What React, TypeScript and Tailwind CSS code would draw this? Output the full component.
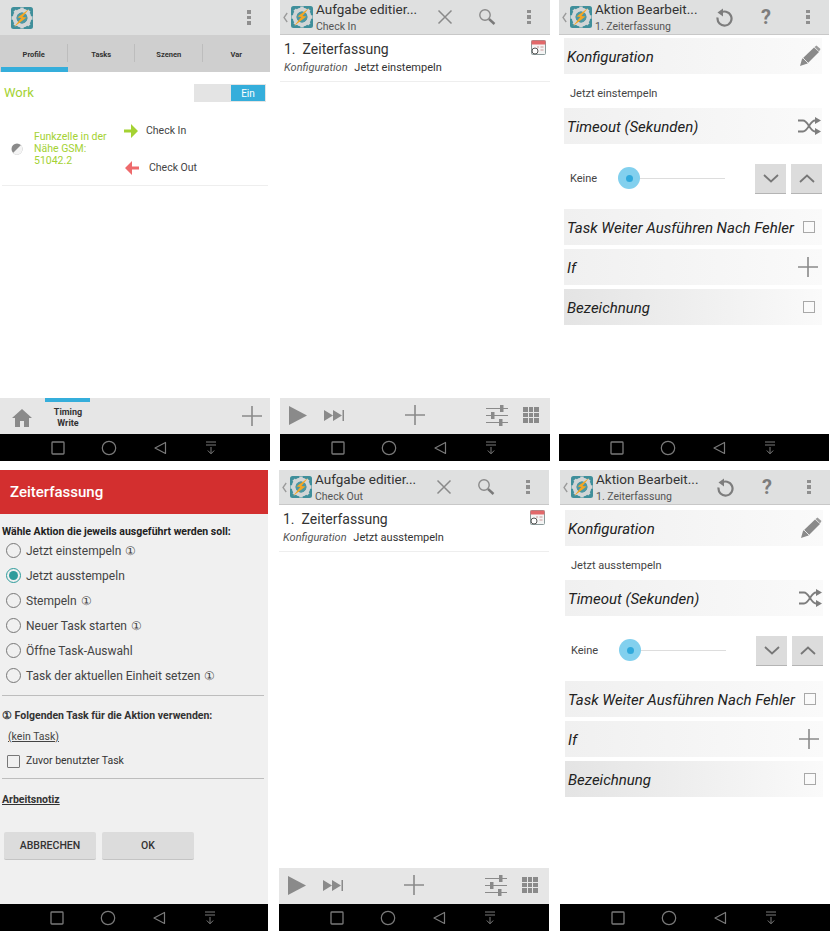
import type { ReactNode } from "react";

const font = { fontFamily: "Roboto, 'Liberation Sans', sans-serif" };

function Logo() {
  return (
    <svg width="22" height="22" viewBox="0 0 22 22" className="shrink-0">
      <rect width="22" height="22" rx="2.5" fill="#3f8f9b" />
      <circle cx="11" cy="11" r="7.4" fill="none" stroke="#d2d5d6" strokeWidth="4" />
      <g stroke="#d2d5d6" strokeWidth="3.4">
        <path d="M11 0.5v3.5M11 18v3.5M0.5 11H4M18 11h3.5M3.6 3.6l2.4 2.4M16 16l2.4 2.4M18.4 3.6L16 6M6 16l-2.4 2.4" />
      </g>
      <circle cx="11" cy="11" r="5.4" fill="#4d97a3" />
      <path d="M18 2L6.5 10.5l3.8.4L3 20l12.5-9.5-4-.4z" fill="#f5a623" />
    </svg>
  );
}

function Dots() {
  return (
    <div className="flex flex-col gap-[2px]">
      <div className="w-[4px] h-[3.5px] bg-[#8f8f8f]" />
      <div className="w-[4px] h-[3.5px] bg-[#8f8f8f]" />
      <div className="w-[4px] h-[3.5px] bg-[#8f8f8f]" />
    </div>
  );
}

function Plus({ size = 22 }: { size?: number }) {
  return (
    <svg width={size} height={size} viewBox="0 0 22 22">
      <path d="M11 1v20M1 11h20" stroke="#8a8a8a" strokeWidth="1.6" />
    </svg>
  );
}

function NavBar({ narrow }: { narrow?: boolean }) {
  return (
    <div className={`h-[27px] bg-black flex items-center shrink-0 ${narrow ? "pl-[31px]" : "pl-[32px]"}`}>
      <div className="w-[51px] flex justify-center">
        <svg width="14" height="14" viewBox="0 0 14 14">
          <rect x="1" y="1" width="12" height="12" rx="0.8" fill="none" stroke="#7a7a7a" strokeWidth="1.3" />
        </svg>
      </div>
      <div className="w-[51px] flex justify-center">
        <svg width="16" height="16" viewBox="0 0 16 16">
          <circle cx="8" cy="8" r="6.7" fill="none" stroke="#7a7a7a" strokeWidth="1.2" />
        </svg>
      </div>
      <div className="w-[51px] flex justify-center">
        <svg width="14" height="14" viewBox="0 0 14 14">
          <path d="M12.5 1.5v11L2 7z" fill="none" stroke="#7a7a7a" strokeWidth="1.2" strokeLinejoin="round" />
        </svg>
      </div>
      <div className="w-[51px] flex justify-center">
        <svg width="12" height="14" viewBox="0 0 12 14">
          <path d="M1 1h10M1 4h10M6 6v6.5M2.8 9.5L6 12.8l3.2-3.3" fill="none" stroke="#7a7a7a" strokeWidth="1" />
        </svg>
      </div>
    </div>
  );
}

function Header({ title, sub, actions }: { title: string; sub: string; actions: ReactNode[] }) {
  return (
    <div className="h-[35px] bg-[#dfe0e0] border-b border-[#c8c8c8] flex items-center shrink-0">
      <svg width="5" height="11" viewBox="0 0 5 11" className="ml-[3px] mr-[3px] shrink-0">
        <path d="M4.2 1L1 5.5 4.2 10" fill="none" stroke="#9a9a9a" strokeWidth="1.3" />
      </svg>
      <div className="-mt-[1px]">
        <Logo />
      </div>
      <div className="ml-[3px] w-[108px] shrink-0 mt-[1px]">
        <div className="text-[13.5px] leading-[16px] text-[#333] whitespace-nowrap">{title}</div>
        <div className="text-[10.5px] leading-[14px] mt-[3px] text-[#555] whitespace-nowrap">{sub}</div>
      </div>
      {actions.map((a, i) => (
        <div key={i} className="w-[42px] flex justify-center shrink-0">
          {a}
        </div>
      ))}
    </div>
  );
}

function TaskBottomBar() {
  return (
    <div className="mt-auto h-[36px] pb-[2px] bg-[#e6e6e6] flex items-center shrink-0">
      <svg width="18" height="19" viewBox="0 0 18 19" className="ml-[9px]">
        <path d="M0 0l18 9.5L0 19z" fill="#8a8a8a" />
      </svg>
      <svg width="20" height="11" viewBox="0 0 20 11" className="ml-[17px]">
        <path d="M0 0l9 5.5L0 11zM9 0l9 5.5L9 11z" fill="#8a8a8a" />
        <rect x="18.5" width="1.5" height="11" fill="#8a8a8a" />
      </svg>
      <div className="ml-[60px]">
        <Plus />
      </div>
      <svg width="22" height="21" viewBox="0 0 22 21" className="ml-[60px]">
        <path d="M0 3.5h22M0 10.5h22M0 17.5h22" stroke="#8a8a8a" strokeWidth="1.2" />
        <rect x="14" y="0" width="3.5" height="7" fill="#8a8a8a" />
        <rect x="5" y="7" width="3.5" height="7" fill="#8a8a8a" />
        <rect x="13" y="14" width="3.5" height="7" fill="#8a8a8a" />
      </svg>
      <div className="ml-[15px] grid grid-cols-3 gap-[1px] w-[16px]">
        {Array.from({ length: 9 }).map((_, i) => (
          <div key={i} className="h-[4.4px] bg-[#8a8a8a]" />
        ))}
      </div>
    </div>
  );
}

function TaskPanel({ sub, action }: { sub: string; action: string }) {
  return (
    <div className="w-[270px] h-[461px] flex flex-col shrink-0">
      <Header
        title="Aufgabe editier..."
        sub={sub}
        actions={[
          <svg key="x" width="16" height="16" viewBox="0 0 16 16">
            <path d="M1.5 1.5l13 13M14.5 1.5l-13 13" stroke="#8a8a8a" strokeWidth="1.5" />
          </svg>,
          <svg key="s" width="18" height="18" viewBox="0 0 18 18">
            <circle cx="7" cy="7" r="5.2" fill="none" stroke="#8a8a8a" strokeWidth="1.4" />
            <path d="M11 11l5.5 5" stroke="#7a7a7a" strokeWidth="2.4" />
          </svg>,
          <Dots key="d" />,
        ]}
      />
      <div className="h-[47px] border-b border-[#eeeeee] px-[4px] relative">
        <div className="text-[14px] leading-[18px] mt-[5px] text-[#333]">
          <span className="mr-[7px]">1.</span>
          Zeiterfassung
        </div>
        <div className="text-[11px] leading-[14px] mt-[3px] text-[#333]">
          <span className="italic text-[#555] mr-[4px]">Konfiguration</span> {action}
        </div>
        <svg width="15" height="15" viewBox="0 0 15 15" className="absolute right-[4px] top-[5px]">
          <rect x="0.5" y="0.5" width="14" height="14" rx="1" fill="#f4f4f4" stroke="#8a9a9a" />
          <rect x="0.5" y="0.5" width="14" height="4" fill="#e2686a" />
          <path d="M6 7h2M9.5 7h3M9.5 10h3" stroke="#c99" strokeWidth="1.2" />
          <circle cx="4" cy="11" r="3" fill="#fff" stroke="#555" />
        </svg>
      </div>
      <TaskBottomBar />
      <NavBar />
    </div>
  );
}

function ActionRow({ label, right, dark }: { label: string; right: ReactNode; dark?: boolean }) {
  return (
    <div
      className={`h-[36px] flex items-center justify-between pl-[3px] bg-gradient-to-r ${
        dark ? "from-[#e4e4e4] to-[#fafafa]" : "from-[#f0f0f0] to-[#fafafa]"
      }`}
    >
      <span className="text-[15px] italic text-[#222] whitespace-nowrap mt-[2px]">{label}</span>
      {right}
    </div>
  );
}

function Checkbox() {
  return <div className="w-[12px] h-[12px] border border-[#a8a8a8] bg-[#fafafa] mr-[7px]" />;
}

function Chevron({ up }: { up?: boolean }) {
  return (
    <div className="w-[31px] h-[30px] bg-[#dcdcdc] border-b border-[#b4b4b4] flex items-center justify-center">
      <svg width="16" height="9" viewBox="0 0 16 9">
        <path d={up ? "M1 8l7-6.5L15 8" : "M1 1l7 6.5L15 1"} fill="none" stroke="#777" strokeWidth="1.8" />
      </svg>
    </div>
  );
}

function ActionPanel({ action, low }: { action: string; low?: boolean }) {
  return (
    <div className="w-[270px] h-[461px] flex flex-col shrink-0">
      <Header
        title="Aktion Bearbeit..."
        sub="1. Zeiterfassung"
        actions={[
          <svg key="r" width="18" height="19" viewBox="0 0 18 19">
            <path d="M5 5.2A7 7 0 1 1 2.6 9.5" fill="none" stroke="#7d7d7d" strokeWidth="2.2" />
            <path d="M8 0.5v8L2.5 4.5z" fill="#7d7d7d" />
          </svg>,
          <span key="q" className="text-[20px] font-bold leading-none text-[#7d7d7d]">?</span>,
          <Dots key="d" />,
        ]}
      />
      <div className={`pl-[5px] pr-[7px] flex-1 flex flex-col ${low ? "pt-[5px]" : "pt-[3px]"}`}>
        <ActionRow
          label="Konfiguration"
          right={
            <svg width="22" height="22" viewBox="0 0 22 22" className="mr-[1px]">
              <path d="M1 21l2-7L15 2.5l5 4.5L8.5 18.5z" fill="#8a8a8a" />
              <path d="M15.5 2l2-1.5 4 3.5-1.5 2.5z" fill="#9a9a9a" />
              <path d="M4 13l5 5" stroke="#e8e8e8" strokeWidth="1" />
            </svg>
          }
        />
        <div className="h-[34px] flex items-center pl-[6px] pt-[6px] text-[11px] text-[#444]">{action}</div>
        <ActionRow
          label="Timeout (Sekunden)"
          right={
            <svg width="23" height="18" viewBox="0 0 23 18" className="mr-[1px]">
              <path d="M0 3.5h5c5 0 7 11 12 11h2M0 14.5h5c5 0 7-11 12-11h2" fill="none" stroke="#7d7d7d" strokeWidth="1.8" />
              <path d="M17 0l6 3.5L17 7zM17 11l6 3.5L17 18z" fill="#7d7d7d" />
            </svg>
          }
        />
        <div className="h-[65px] flex items-center pt-[4px]">
          <span className="text-[11px] text-[#444] ml-[6px] w-[48px] mt-[2px]">Keine</span>
          <div className="relative w-[107px] h-[1px] bg-[#dddddd]">
            <div className="absolute -top-[11px] left-0 w-[22px] h-[22px] rounded-full bg-[#82d0ee] flex items-center justify-center">
              <div className="w-[7px] h-[7px] rounded-full bg-[#2fa9dc]" />
            </div>
          </div>
          <div className="ml-[30px] flex gap-[5px]">
            <Chevron />
            <Chevron up />
          </div>
        </div>
        <div className="flex flex-col gap-[4px]">
          <ActionRow label="Task Weiter Ausführen Nach Fehler" right={<Checkbox />} />
          <ActionRow label="If" right={<div className="mr-[3px] flex"><Plus /></div>} />
          <ActionRow label="Bezeichnung" dark right={<Checkbox />} />
        </div>
      </div>
      <NavBar />
    </div>
  );
}

function ProfilePanel() {
  const tabs = ["Profile", "Tasks", "Szenen", "Var"];
  return (
    <div className="w-[270px] h-[461px] flex flex-col shrink-0">
      <div className="h-[35px] bg-[#dfe0e0] flex items-center justify-between pl-[11px] pr-[19px] shrink-0">
        <Logo />
        <Dots />
      </div>
      <div className="h-[37px] bg-[#cfcfcf] grid grid-cols-4 shrink-0">
        {tabs.map((t, i) => (
          <div key={t} className="relative flex items-center justify-center text-[7.5px] font-bold text-[#333]">
            <span className="mt-[2px]">{t}</span>
            {i === 0 && <div className="absolute left-[1px] right-0 bottom-0 h-[5px] bg-[#35aedb]" />}
            {i < 3 && <div className="absolute right-0 top-[9px] h-[18px] w-[1px] bg-[#bdbdbd]" />}
          </div>
        ))}
      </div>
      <div className="h-[40px] flex items-center justify-between px-[4px] mt-[1px]">
        <span className="text-[13px] text-[#a4d233]">Work</span>
        <div className="w-[72px] h-[18px] bg-[#e4e4e4] flex justify-end items-center pr-[1px]">
          <div className="w-[34px] h-[16px] bg-[#35aedb] text-white text-[10px] flex items-center justify-center">Ein</div>
        </div>
      </div>
      <div className="h-[73px] mx-[2px] border-b border-[#eeeeee] flex items-center">
        <svg width="12" height="12" viewBox="0 0 12 12" className="ml-[9px] shrink-0">
          <circle cx="6" cy="6" r="5.5" fill="#8a8a8a" />
          <path d="M10 2.1A5.5 5.5 0 0 1 2 10 z" fill="#f4f4f4" />
        </svg>
        <div className="w-[90px] ml-[11px] text-[10.5px] leading-[12px] text-[#a4d233] shrink-0">
          Funkzelle in der Nähe GSM: 51042.2
        </div>
        <div className="flex flex-col gap-[23px] text-[10.5px] text-[#444]">
          <div className="flex items-center h-[14px]">
            <svg width="14" height="14" viewBox="0 0 14 14" className="shrink-0">
              <path d="M0 5.5h7V0l7 7-7 7V8.5H0z" fill="#a4d233" />
            </svg>
            <span className="ml-[8px]">Check In</span>
          </div>
          <div className="flex items-center h-[14px]">
            <svg width="14" height="14" viewBox="0 0 14 14" className="ml-[1px] shrink-0">
              <path d="M14 5.5H7V0L0 7l7 7V8.5h7z" fill="#ee6a6c" />
            </svg>
            <span className="ml-[10px]">Check Out</span>
          </div>
        </div>
      </div>
      <div className="mt-auto h-[36px] bg-[#e6e6e6] flex items-center shrink-0 relative">
        <svg width="20" height="18" viewBox="0 0 20 18" className="ml-[12px] mt-[3px] shrink-0">
          <path d="M10 0L0 9h3v9h5v-6h4v6h5V9h3z" fill="#8a8a8a" />
        </svg>
        <div className="ml-[13px] w-[46px] text-center text-[9px] leading-[11px] font-bold text-[#333] pt-[3px]">
          Timing
          <br />
          Write
        </div>
        <div className="absolute left-[45px] top-0 w-[45px] h-[4px] bg-[#35aedb]" />
        <div className="ml-auto mr-[7px] flex">
          <Plus />
        </div>
      </div>
      <NavBar />
    </div>
  );
}

function Radio({ label, on, note }: { label: string; on?: boolean; note?: boolean }) {
  return (
    <div className="h-[25px] flex items-center text-[12px] text-[#444]">
      <div
        className={`w-[15px] h-[15px] rounded-full border-[1.5px] ml-[6px] mr-[5px] flex items-center justify-center ${
          on ? "border-[#2f9c9c]" : "border-[#777]"
        }`}
      >
        {on && <div className="w-[9px] h-[9px] rounded-full bg-[#2f9c9c]" />}
      </div>
      <span>{label}</span>
      {note && <span className="ml-[4px] text-[12px]">①</span>}
    </div>
  );
}

function DialogPanel() {
  return (
    <div className="w-[268px] h-[461px] flex flex-col bg-[#f0f0f0] shrink-0">
      <div className="h-[44px] bg-[#d32f2f] text-white text-[15px] font-medium flex items-center pl-[10px] shrink-0">
        Zeiterfassung
      </div>
      <div className="flex-1">
        <div className="text-[10.5px] font-bold text-[#222] leading-[14px] pl-[2px] mt-[11px]">
          Wähle Aktion die jeweils ausgeführt werden soll:
        </div>
        <div className="-mt-[1px]">
          <Radio label="Jetzt einstempeln" note />
          <Radio label="Jetzt ausstempeln" on />
          <Radio label="Stempeln" note />
          <Radio label="Neuer Task starten" note />
          <Radio label="Öffne Task-Auswahl" />
          <Radio label="Task der aktuellen Einheit setzen" note />
        </div>
        <div className="h-[1px] bg-[#bdbdbd] ml-[2px] mr-[4px] mt-[7px]" />
        <div className="text-[10.5px] font-bold text-[#333] leading-[14px] pl-[2px] mt-[13px]">
          ① Folgenden Task für die Aktion verwenden:
        </div>
        <div className="text-[10.5px] underline text-[#444] leading-[14px] pl-[8px] mt-[7px]">(kein Task)</div>
        <div className="flex items-center mt-[10px] h-[14px] text-[10.5px] text-[#333]">
          <div className="w-[13px] h-[13px] border-[1.5px] border-[#777] rounded-[1px] ml-[7px] mr-[6px]" />
          Zuvor benutzter Task
        </div>
        <div className="h-[1px] bg-[#bdbdbd] ml-[2px] mr-[4px] mt-[10px]" />
        <div className="text-[10.5px] font-bold underline text-[#333] leading-[14px] pl-[2px] mt-[14px]">
          Arbeitsnotiz
        </div>
        <div className="flex gap-[6px] pl-[4px] mt-[25px]">
          <div className="w-[92px] h-[28px] bg-[#dcdcdc] rounded-[2px] border-b border-[#c4c4c4] flex items-center justify-center text-[10.5px] font-medium text-[#333]">
            ABBRECHEN
          </div>
          <div className="w-[92px] h-[28px] bg-[#dcdcdc] rounded-[2px] border-b border-[#c4c4c4] flex items-center justify-center text-[10.5px] font-medium text-[#333]">
            OK
          </div>
        </div>
      </div>
      <NavBar narrow />
    </div>
  );
}

export default function App() {
  return (
    <div className="w-[832px] h-[938px] bg-white overflow-hidden" style={font}>
      <div className="flex">
        <ProfilePanel />
        <div className="ml-[10px]">
          <TaskPanel sub="Check In" action="Jetzt einstempeln" />
        </div>
        <div className="ml-[9px]">
          <ActionPanel action="Jetzt einstempeln" />
        </div>
      </div>
      <div className="flex mt-[9px]">
        <DialogPanel />
        <div className="ml-[11px]">
          <TaskPanel sub="Check Out" action="Jetzt ausstempeln" />
        </div>
        <div className="ml-[11px]">
          <ActionPanel action="Jetzt ausstempeln" low />
        </div>
      </div>
    </div>
  );
}
